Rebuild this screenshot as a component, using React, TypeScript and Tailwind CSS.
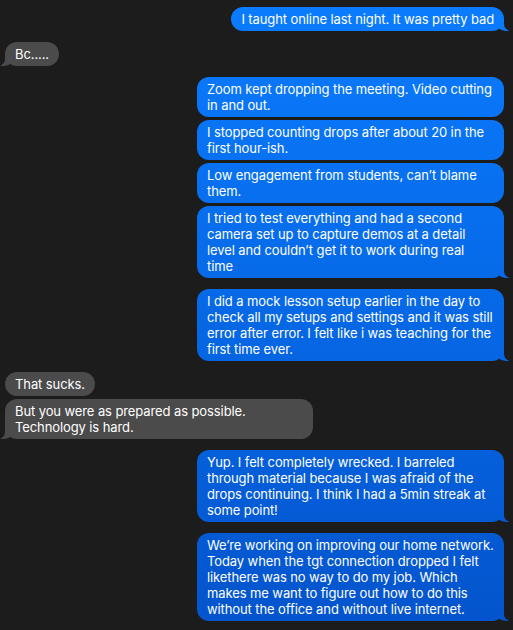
import React from "react";

type Msg = { lines: string[]; me: boolean; tail?: boolean };

const groups: Msg[][] = [
  [{ lines: ["I taught online last night. It was pretty bad"], me: true, tail: true }],
  [{ lines: ["Bc....."], me: false, tail: true }],
  [
    { lines: ["Zoom kept dropping the meeting. Video cutting", "in and out."], me: true },
    { lines: ["I stopped counting drops after about 20 in the", "first hour-ish."], me: true },
    { lines: ["Low engagement from students, can\u2019t blame", "them."], me: true },
    {
      lines: [
        "I tried to test everything and had a second",
        "camera set up to capture demos at a detail",
        "level and couldn\u2019t get it to work during real",
        "time",
      ],
      me: true,
      tail: true,
    },
  ],
  [
    {
      lines: [
        "I did a mock lesson setup earlier in the day to",
        "check all my setups and settings and it was still",
        "error after error. I felt like i was teaching for the",
        "first time ever.",
      ],
      me: true,
      tail: true,
    },
  ],
  [
    { lines: ["That sucks."], me: false },
    { lines: ["But you were as prepared as possible.", "Technology is hard."], me: false, tail: true },
  ],
  [
    {
      lines: [
        "Yup. I felt completely wrecked. I barreled",
        "through material because I was afraid of the",
        "drops continuing. I think I had a 5min streak at",
        "some point!",
      ],
      me: true,
      tail: true,
    },
  ],
  [
    {
      lines: [
        "We\u2019re working on improving our home network.",
        "Today when the tgt connection dropped I felt",
        "likethere was no way to do my job. Which",
        "makes me want to figure out how to do this",
        "without the office and without live internet.",
      ],
      me: true,
      tail: true,
    },
  ],
];

function Text({ lines }: { lines: string[] }) {
  return (
    <span className="relative block whitespace-pre">
      {lines.map((l, i) => (
        <React.Fragment key={i}>
          {i > 0 && <br />}
          {l}
        </React.Fragment>
      ))}
    </span>
  );
}

function Bubble({ msg }: { msg: Msg }) {
  const wide = msg.lines.length > 1;
  if (msg.me) {
    return (
      <div className="flex justify-end">
        <div
          className={
            "relative rounded-[12px] bg-fixed bg-linear-to-b from-[#0b7cff] to-[#0454cc] px-[10px] py-[4px] text-white " +
            (wide ? "w-[307px] " : "") +
            (msg.tail
              ? "before:absolute before:bottom-0 before:right-[-5px] before:h-[14px] before:w-[14px] before:rounded-bl-[11px_10px] before:bg-fixed before:bg-linear-to-b before:from-[#0b7cff] before:to-[#0454cc] before:content-[''] after:absolute after:bottom-0 after:right-[-18px] after:h-[14px] after:w-[18px] after:rounded-bl-[7px] after:bg-[#1c1c1c] after:content-['']"
              : "")
          }
        >
          <Text lines={msg.lines} />
        </div>
      </div>
    );
  }
  return (
    <div className="flex justify-start">
      <div
        className={
          "relative rounded-[12px] bg-[#4b4b4b] px-[10px] py-[4px] text-white " +
          (wide ? "w-[308px] " : "") +
          (msg.tail
            ? "before:absolute before:bottom-0 before:left-[-4px] before:h-[14px] before:w-[14px] before:rounded-br-[11px_10px] before:bg-[#4b4b4b] before:content-[''] after:absolute after:bottom-0 after:left-[-18px] after:h-[14px] after:w-[18px] after:rounded-br-[7px] after:bg-[#1c1c1c] after:content-['']"
            : "")
        }
      >
        <Text lines={msg.lines} />
      </div>
    </div>
  );
}

export default function App() {
  return (
    <div
      className="min-h-[630px] w-[513px] bg-[#1c1c1c] pl-[5px] pr-[9px] pt-[7px] text-[13px] leading-[16px] tracking-[-0.1px]"
      style={{ fontFamily: "Inter, 'Liberation Sans', sans-serif" }}
    >
      <div className="flex flex-col gap-[11px]">
        {groups.map((g, i) => (
          <div key={i} className="flex flex-col gap-[3px]">
            {g.map((m, j) => (
              <Bubble key={j} msg={m} />
            ))}
          </div>
        ))}
      </div>
    </div>
  );
}
